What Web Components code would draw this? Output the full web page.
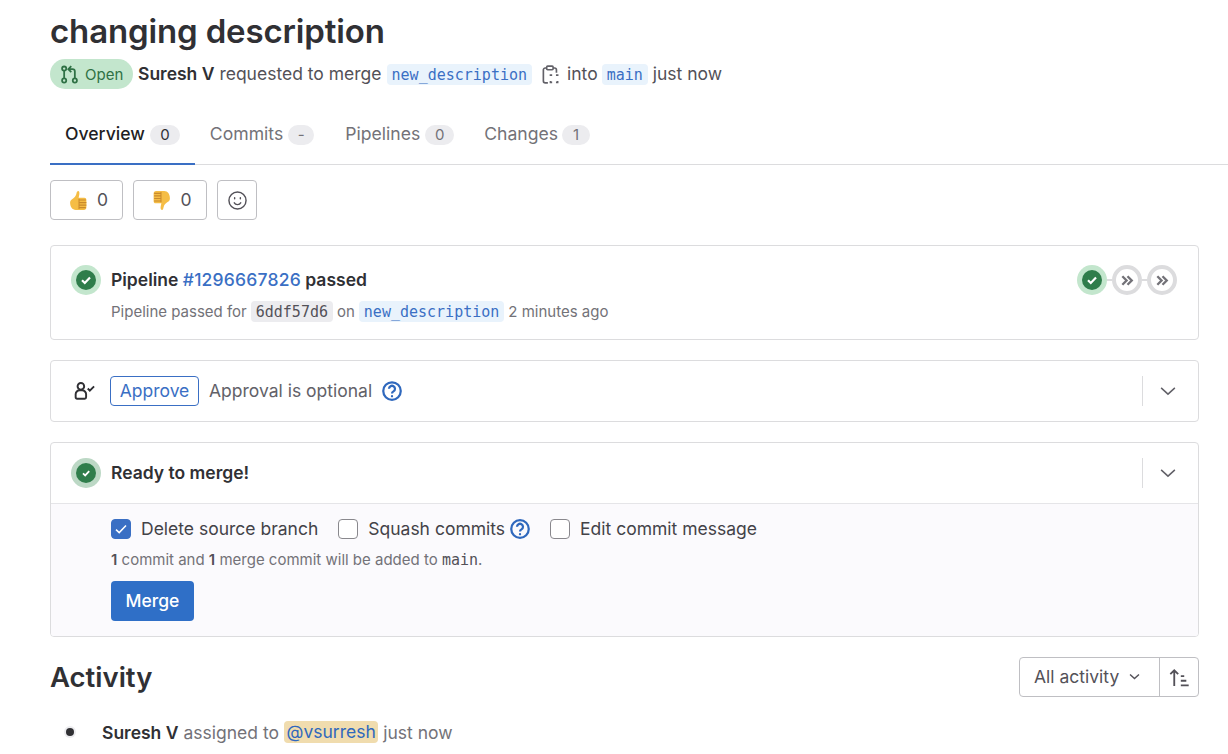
<!DOCTYPE html>
<html lang="en">
<head>
<meta charset="utf-8">
<title>changing description</title>
<style>
  html, body { margin: 0; background: #fff; }
  body { font-family: Inter, "Noto Sans", sans-serif; color: #303030; overflow: hidden; height: 754px; }
</style>
</head>
<body>
<mr-page></mr-page>

<script>
// Icon strokes, all on a 16 unit grid
const ICONS = {
  merge: '<circle cx="3.5" cy="3" r="1.75"/><circle cx="3.5" cy="13" r="1.75"/><circle cx="12.5" cy="13" r="1.75"/><path d="M3.5 4.8v6.4M12.5 11.2V5.5a2 2 0 0 0-2-2H7.5M9.5 1 7 3.5 9.5 6"/>',
  copy: '<path d="M4.8 2.5H3.6A1.6 1.6 0 0 0 2 4.1v9.3A1.6 1.6 0 0 0 3.6 15h2.2M10.2 2.5h1.2A1.6 1.6 0 0 1 13 4.1v2.4"/><rect x="4.8" y="1" width="5.4" height="3" rx=".8"/><path d="M8 9.2V8.5h1.4M12.6 8.5H14v.7M14 13.4v1.2h-1.4M9.4 14.6H8v-1.2"/>',
  smile: '<circle cx="8" cy="8" r="7.2"/><path d="M5 9.6c.7 1.2 1.8 1.9 3 1.9s2.3-.7 3-1.9"/><path d="M5.6 5.6v1M10.4 5.6v1" stroke-linecap="round"/>',
  approver: '<circle cx="5" cy="4.6" r="2.4"/><path d="M1.2 10.4A2.9 2.9 0 0 1 4.100 7.500h1.800a2.900 2.900 0 0 1 2.900 2.900v2.200a1 1 0 0 1-1 1H2.200a1 1 0 0 1-1-1Z"/><path d="M10 6.200l1.500 1.500 3.100-3.100"/>',
  help: '<circle cx="8" cy="8" r="7"/><path d="M5.600 6.200a2.400 2.400 0 1 1 3.600 2.100c-.8.45-1.200.9-1.200 1.700"/><path d="M8 12.100v.1" stroke-linecap="round"/>',
  chevron: '<path d="m2.500 5.500 5.500 5 5.500-5"/>',
  skip: '<path d="m2.500 3.500 4.500 4.500-4.500 4.500M8 3.500l4.500 4.500L8 12.500"/>',
  sort: '<path d="M4 14.500v-12M1 5.500l3-3 3 3M9 7h2.600M9 10.500h4.200M9 14h6"/>'
};

class GlIcon extends HTMLElement {
  connectedCallback() {
    const size = this.getAttribute('size') || 16;
    const stroke = this.getAttribute('stroke') || 1.5;
    this.attachShadow({ mode: 'open' }).innerHTML = `
      <style>
        :host { display: inline-flex; flex: none; width: ${size}px; height: ${size}px; }
        svg { display: block; fill: none; stroke: currentColor; stroke-width: ${stroke}; }
      </style>
      <svg width="${size}" height="${size}" viewBox="0 0 16 16">${ICONS[this.getAttribute('name')]}</svg>`;
  }
}

// Code chip: branch names and commit shas
class CodeChip extends HTMLElement {
  constructor() {
    super();
    this.attachShadow({ mode: 'open' }).innerHTML = `
      <style>
        :host {
          display: inline-block; font-family: "DejaVu Sans Mono", "Liberation Mono", monospace;
          font-size: 15px; line-height: 15px; color: #3a6fc4; background: #e9f3fc;
          border-radius: 4px; padding: 4px 5px 2px;
        }
        :host([plain]) { color: #535158; background: #ececef; }
      </style><slot></slot>`;
  }
}

// Round status badge with a check, ring in a pale green
class StatusCheck extends HTMLElement {
  constructor() {
    super();
    const mark = this.hasAttribute('small')
      ? '<path d="m7 10.300 2.200 2.100 4-4.200" fill="none" stroke="#fff" stroke-width="1.800"/>'
      : '<path d="m6 10.200 2.800 2.800 5.200-5.400" fill="none" stroke="#fff" stroke-width="2.200"/>';
    this.attachShadow({ mode: 'open' }).innerHTML = `
      <style>
        :host { display: inline-flex; flex: none; width: 30px; height: 30px; border-radius: 50%;
          background: var(--ring, #c3e6cd); align-items: center; justify-content: center; }
        svg { display: block; }
      </style>
      <svg width="20" height="20" viewBox="0 0 20 20">
        <circle cx="10" cy="10" r="10" fill="#2f7d4b"/>${mark}
      </svg>`;
  }
}

class MrHeader extends HTMLElement {
  constructor() {
    super();
    this.attachShadow({ mode: 'open' }).innerHTML = `
      <style>
        :host { display: block; }
        h1 { margin: 0; font-size: 33px; line-height: 40px; font-weight: 600; color: #303034; letter-spacing: -.15px; padding-top: 11px; }
        .meta { display: flex; align-items: center; height: 30px; margin-top: 8px; font-size: 17.5px; color: #535158; white-space: nowrap; }
        .badge { display: inline-flex; align-items: center; gap: 6px; width: 83px; height: 30px; box-sizing: border-box;
          padding-left: 10px; border-radius: 15px; background: #c3e6cd; color: #2f7145; font-size: 15px; margin-right: 5px; }
        b { color: #303034; font-weight: 600; }
        .tx { margin-bottom: 2px; }
        .sp { margin-left: 5px; }
        .copy { color: #626168; margin: 0 7px 0 9px; }
        .main { margin-left: 4px; }
      </style>
      <h1>changing description</h1>
      <div class="meta">
        <span class="badge"><gl-icon name="merge" size="19"></gl-icon>Open</span>
        <span class="tx"><b>Suresh V</b> requested to merge</span>
        <code-chip class="sp">new_description</code-chip>
        <gl-icon class="copy" name="copy" size="19" stroke="1.4"></gl-icon>
        <span class="tx">into</span>
        <code-chip class="main">main</code-chip>
        <span class="tx sp">just now</span>
      </div>`;
  }
}

class MrTabs extends HTMLElement {
  constructor() {
    super();
    this.attachShadow({ mode: 'open' }).innerHTML = `
      <style>
        :host { display: flex; height: 46px; margin-top: 29px; border-bottom: 1px solid #dcdcde; font-size: 17.6px; color: #737278; }
        .tab { display: flex; align-items: flex-start; gap: 5px; padding: 4px 15px 0; box-sizing: border-box; height: 47px; line-height: 23px; }
        .tab.on { color: #1f1e24; font-weight: 500; border-bottom: 2px solid #3a6fc4; }
        .tab.on i { color: #303034; }
        i { font-style: normal; font-size: 15px; font-weight: 400; line-height: 20px; margin-top: 3px; border-radius: 10px; background: #ececef; color: #737278; text-align: center; box-sizing: border-box; }
      </style>
      <div class="tab on">Overview <i style="width:30px">0</i></div>
      <div class="tab">Commits <i style="width:26px">-</i></div>
      <div class="tab" style="margin-left:1px">Pipelines <i style="width:29px">0</i></div>
      <div class="tab" style="gap:4px">Changes <i style="width:28px">1</i></div>`;
  }
}

class AwardBar extends HTMLElement {
  constructor() {
    super();
    this.attachShadow({ mode: 'open' }).innerHTML = `
      <style>
        :host { display: flex; gap: 10px; margin-top: 15px; font-size: 17.5px; color: #535158; }
        .btn { display: flex; align-items: center; justify-content: center; gap: 8px; height: 40px; box-sizing: border-box;
          border: 1px solid #bfbfc3; border-radius: 4px; }
        .btn span { margin-bottom: 2px; }
        .e { padding-left: 3px; }
        svg { display: block; }
      </style>
      <div class="btn e" style="width:73px">
        <svg width="21" height="21" viewBox="0 0 20 20">
          <path fill="#f5bd45" d="M2 12c0-1.600.9-2.700 2.200-3.500C6 7.400 7.200 6.200 7.800 4.400c.4-1.200.5-3.400 1.800-3.400 1.200 0 1.400 1.600 1.200 3-.2 1.300-.5 2.400-.7 3.300h5.400c1.300 0 2 .9 2 2v7.300c0 1.500-1 2.400-2.300 2.400H7.400C4 19 2 16 2 12Z"/>
          <path stroke="#c98a2c" stroke-width="1" fill="none" d="M10.500 8.400v9.600M10.500 9.600h6.500M10.500 12h7M10.500 14.400h7M10.500 16.800h6.500"/>
        </svg><span>0</span>
      </div>
      <div class="btn e" style="width:74px">
        <svg width="21" height="21" viewBox="0 0 20 20">
          <path fill="#f5bd45" d="M18 8c0 1.600-.9 2.700-2.200 3.500-1.800 1.100-3 2.300-3.600 4.100-.4 1.200-.5 3.400-1.800 3.400-1.200 0-1.400-1.600-1.200-3 .2-1.300.5-2.400.7-3.300H4.500c-1.300 0-2-.9-2-2V3.400C2.500 1.900 3.500 1 4.800 1h7.800C16 1 18 4 18 8Z"/>
          <path stroke="#c98a2c" stroke-width="1" fill="none" d="M9.500 11.600V2M3 3.200h6.500M3 5.600h6.500M3 8h6.500M3 10.400h6.500"/>
        </svg><span>0</span>
      </div>
      <div class="btn" style="width:40px"><gl-icon name="smile" size="19" stroke="1.2"></gl-icon></div>`;
  }
}

// Bordered widget card: the slot holds its rows
class MrCard extends HTMLElement {
  constructor() {
    super();
    this.attachShadow({ mode: 'open' }).innerHTML = `
      <style>
        :host { display: block; border: 1px solid #dcdcde; border-radius: 4px; box-sizing: border-box; overflow: hidden; margin-top: 20px; background: #fff; }
      </style><slot></slot>`;
  }
}

class PipelineRow extends HTMLElement {
  constructor() {
    super();
    this.attachShadow({ mode: 'open' }).innerHTML = `
      <style>
        :host { display: flex; height: 93px; padding: 19px 21px 0 20px; box-sizing: border-box; }
        .txt { margin-left: 10px; flex: 1; }
        .t { font-size: 17.5px; line-height: 30px; font-weight: 600; color: #303034; }
        a { color: #3a6fc4; text-decoration: none; font-weight: 500; letter-spacing: .2px; }
        .s { font-size: 15px; color: #737278; display: flex; align-items: center; height: 24px; margin-top: 4px; white-space: nowrap; }
        code-chip { margin: 0 4px; }
        .mini { display: flex; align-items: center; height: 30px; }
        .mini i { width: 5px; height: 2px; background: #dcdcde; }
        .skip { width: 30px; height: 30px; box-sizing: border-box; border: 4px solid #dcdcde; border-radius: 50%; display: flex; align-items: center; justify-content: center; color: #737278; }
      </style>
      <status-check></status-check>
      <div class="txt">
        <div class="t">Pipeline <a>#1296667826</a> passed</div>
        <div class="s">Pipeline passed for <code-chip plain>6ddf57d6</code-chip>on <code-chip>new_description</code-chip>2 minutes ago</div>
      </div>
      <div class="mini">
        <status-check></status-check><i></i>
        <span class="skip"><gl-icon name="skip" size="15" stroke="2.500"></gl-icon></span><i></i>
        <span class="skip"><gl-icon name="skip" size="15" stroke="2.500"></gl-icon></span>
      </div>`;
  }
}

// Single line row with a divider and a chevron on the right
class ExpandRow extends HTMLElement {
  constructor() {
    super();
    this.attachShadow({ mode: 'open' }).innerHTML = `
      <style>
        :host { display: flex; align-items: center; height: 60px; padding-left: 20px; box-sizing: border-box; }
        .main { flex: 1; display: flex; align-items: center; min-width: 0; }
        .end { display: flex; align-items: center; justify-content: center; width: 56px; height: 30px; box-sizing: border-box; padding-right: 6px; border-left: 1px solid #dcdcde; color: #626168; }
      </style>
      <div class="main"><slot></slot></div>
      <div class="end"><gl-icon name="chevron" size="20" stroke="1.2"></gl-icon></div>`;
  }
}

class ApprovalRow extends HTMLElement {
  constructor() {
    super();
    this.attachShadow({ mode: 'open' }).innerHTML = `
      <style>
        :host { display: flex; align-items: center; font-size: 17.5px; color: #626168; white-space: nowrap; }
        .ic { color: #303034; margin: 0 14px 0 3px; }
        .btn { display: flex; align-items: center; justify-content: center; width: 89px; height: 30px; padding-bottom: 2px; box-sizing: border-box; border: 1px solid #3a6fc4; border-radius: 4px; color: #3a6fc4; margin-right: 10px; }
        .tx { margin-bottom: 2px; }
        .help { color: #2f68bd; margin-left: 10px; }
      </style>
      <gl-icon class="ic" name="approver" size="22" stroke="1.4"></gl-icon>
      <span class="btn">Approve</span>
      <span class="tx">Approval is optional</span>
      <gl-icon class="help" name="help" size="20" stroke="1.8"></gl-icon>`;
  }
}

class ReadyRow extends HTMLElement {
  constructor() {
    super();
    this.attachShadow({ mode: 'open' }).innerHTML = `
      <style>
        :host { display: flex; align-items: center; font-size: 17.5px; font-weight: 600; color: #303034; --ring: #bcd8c5; }
        span { margin: 0 0 2px 10px; }
      </style>
      <status-check small></status-check><span>Ready to merge!</span>`;
  }
}

class CheckOption extends HTMLElement {
  constructor() {
    super();
    const on = this.hasAttribute('checked');
    this.attachShadow({ mode: 'open' }).innerHTML = `
      <style>
        :host { display: inline-flex; align-items: center; gap: 10px; font-size: 17.5px; color: #434248; white-space: nowrap; }
        .box { width: 20px; height: 20px; box-sizing: border-box; border-radius: 4px; border: 1px solid ${on ? '#3a6fc4' : '#89888d'}; background: ${on ? '#3a6fc4' : '#fff'}; }
        .lbl { margin-bottom: 2px; }
        svg { display: block; }
      </style>
      <span class="box">${on ? '<svg width="18" height="18" viewBox="0 0 18 18"><path d="m4 9.600 3.200 3L14 5.400" fill="none" stroke="#fff" stroke-width="1.500"/></svg>' : ''}</span>
      <span class="lbl"><slot></slot></span>`;
  }
}

class MergePanel extends HTMLElement {
  constructor() {
    super();
    this.attachShadow({ mode: 'open' }).innerHTML = `
      <style>
        :host { display: block; background: #fbfafd; border-top: 1px solid #e5e5e8; height: 133px; padding: 13px 0 0 60px; box-sizing: border-box; }
        .opts { display: flex; align-items: center; height: 24px; }
        .help { color: #2f68bd; margin: 0 20px 0 5px; }
        .note { font-size: 15px; color: #737278; line-height: 20px; margin-top: 9px; }
        .note b { font-weight: 600; color: #535158; }
        .note code { font-family: "DejaVu Sans Mono", monospace; color: #535158; font-size: 15px; }
        .btn { display: flex; align-items: center; justify-content: center; width: 83px; height: 40px; padding-bottom: 2px; box-sizing: border-box; margin-top: 11px; background: #2f6fc7; border-radius: 4px; color: #fff; font-size: 17.5px; font-weight: 500; }
      </style>
      <div class="opts">
        <check-option checked style="margin-right:20px">Delete source branch</check-option>
        <check-option>Squash commits</check-option>
        <gl-icon class="help" name="help" size="20" stroke="1.8"></gl-icon>
        <check-option>Edit commit message</check-option>
      </div>
      <div class="note"><b>1</b> commit and <b>1</b> merge commit will be added to <code>main</code>.</div>
      <div class="btn">Merge</div>`;
  }
}

class ActivityHead extends HTMLElement {
  constructor() {
    super();
    this.attachShadow({ mode: 'open' }).innerHTML = `
      <style>
        :host { display: flex; align-items: center; justify-content: space-between; height: 40px; margin-top: 20px; }
        h2 { margin: 0; font-size: 27.5px; font-weight: 600; color: #303034; }
        .grp { display: flex; height: 40px; width: 180px; box-sizing: border-box; border: 1px solid #bfbfc3; border-radius: 4px; color: #535158; font-size: 17.5px; }
        .sel { flex: 1; display: flex; align-items: center; padding: 0 0 2px 14px; gap: 9px; border-right: 1px solid #bfbfc3; }
        .srt { width: 38px; display: flex; align-items: center; justify-content: center; }
      </style>
      <h2>Activity</h2>
      <div class="grp">
        <div class="sel">All activity <gl-icon name="chevron" size="13" stroke="1.8"></gl-icon></div>
        <div class="srt"><gl-icon name="sort" size="21" stroke="1.4"></gl-icon></div>
      </div>`;
  }
}

class ActivityItem extends HTMLElement {
  constructor() {
    super();
    this.attachShadow({ mode: 'open' }).innerHTML = `
      <style>
        :host { display: flex; align-items: center; height: 26px; padding-bottom: 2px; box-sizing: border-box; margin-top: 23px; font-size: 17.5px; color: #737278; white-space: nowrap; }
        .dot { width: 8px; height: 8px; margin: 0 28px 0 16px; border-radius: 50%; background: #303034; box-shadow: 0 0 0 2px #ececef; }
        b { font-weight: 600; color: #303034; margin-right: 5px; }
        .at { background: #f0dcae; color: #2f68bd; border-radius: 4px; padding: 0 2.5px; line-height: 22px; margin: 0 5px; }
      </style>
      <span class="dot"></span><b>Suresh V</b> assigned to <span class="at">@vsurresh</span> just now`;
  }
}

class MrPage extends HTMLElement {
  constructor() {
    super();
    this.attachShadow({ mode: 'open' }).innerHTML = `
      <style>
        :host { display: block; padding: 0 29px 0 50px; }
        mr-tabs { margin-right: -29px; }
        .first { margin-top: 25px; }
      </style>
      <mr-header></mr-header>
      <mr-tabs></mr-tabs>
      <award-bar></award-bar>
      <mr-card class="first"><pipeline-row></pipeline-row></mr-card>
      <mr-card><expand-row><approval-row></approval-row></expand-row></mr-card>
      <mr-card>
        <expand-row><ready-row></ready-row></expand-row>
        <merge-panel></merge-panel>
      </mr-card>
      <activity-head></activity-head>
      <activity-item></activity-item>`;
  }
}

customElements.define('gl-icon', GlIcon);
customElements.define('code-chip', CodeChip);
customElements.define('status-check', StatusCheck);
customElements.define('mr-header', MrHeader);
customElements.define('mr-tabs', MrTabs);
customElements.define('award-bar', AwardBar);
customElements.define('mr-card', MrCard);
customElements.define('pipeline-row', PipelineRow);
customElements.define('expand-row', ExpandRow);
customElements.define('approval-row', ApprovalRow);
customElements.define('ready-row', ReadyRow);
customElements.define('check-option', CheckOption);
customElements.define('merge-panel', MergePanel);
customElements.define('activity-head', ActivityHead);
customElements.define('activity-item', ActivityItem);
customElements.define('mr-page', MrPage);
</script>
</body>
</html>
